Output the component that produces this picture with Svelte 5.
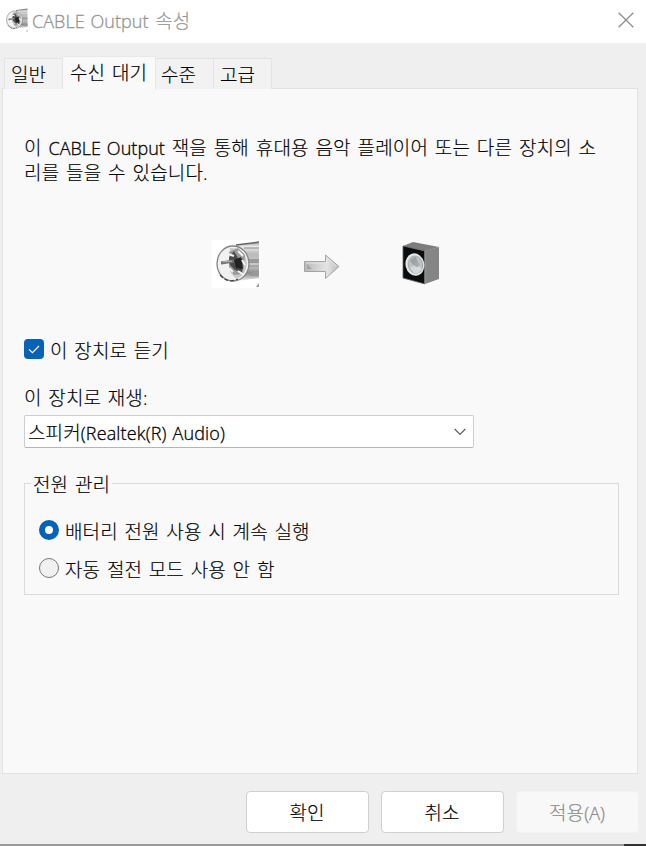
<script>
  const tabs = [
    { label: '일반', width: 59 },
    { label: '수신 대기', width: 93, active: true },
    { label: '수준', width: 58 },
    { label: '고급', width: 58 }
  ];
  let listen = $state(true);
  let power = $state(0);
  const options = ['배터리 전원 사용 시 계속 실행', '자동 절전 모드 사용 안 함'];
</script>

{#snippet jack(size)}
  <svg width={size} height={size} viewBox="0 0 48 48">
    <defs>
      <linearGradient id="metal" x1="0" y1="0" x2="0" y2="1">
        <stop offset="0" stop-color="#999" /><stop offset=".12" stop-color="#eee" />
        <stop offset=".3" stop-color="#bbb" /><stop offset=".6" stop-color="#c8c8c8" />
        <stop offset=".8" stop-color="#8a8a8a" /><stop offset="1" stop-color="#eee" />
      </linearGradient>
    </defs>
    <path d="M0 0H48V48H0Z" fill="#fff" />
    <path d="M21 6 47 2V38L24 41Z" fill="url(#metal)" />
    <path d="M24 5 47 2" stroke="#666" stroke-width="1.5" />
    <path d="M32 8H47M34 26H47" stroke="#888" />
    <path d="M36 19H47V23H36ZM40 31H47V36H38Z" fill="#999" />
    <ellipse cx="21" cy="23.5" rx="16" ry="17.5" fill="#f1f1f1" stroke="#858585" stroke-width="1.3" />
    <path d="M18 8Q33 7 35 23Q34 36 24 39L18 32Z" fill="#c9c9c9" />
    <path d="M17 12 26 8 33 15 31 34 22 35 17 29Z" fill="#999" />
    <path d="M17 18 22 11 26 18 31 19 30 32 23 30 18 25Z" fill="#4a4a4a" />
    <path d="M22 20 29 17 31 29 24 28Z" fill="#222" />
    <path d="M16 14 22 16M26 11 31 16M26 31 32 35M30 20 33 25M17 28 21 32" stroke="#f4f4f4" stroke-width="2" />
    <path d="M9 23 22 21" stroke="#707070" stroke-width="3" />
    <path d="M11 22 20 21" stroke="#bbb" />
    <path d="M8 35Q16 44 26 39" fill="none" stroke="#444" stroke-width="1.3" stroke-dasharray="4 2" />
    <path d="M44 47 47 43V47Z" fill="#999" />
  </svg>
{/snippet}

<div class="window">
  <header>
    {@render jack(24)}
    <span class="title"><span class="en">CABLE Output</span> 속성</span>
    <svg class="close" width="16" height="16" viewBox="0 0 16 16"><path d="M.7.7 15.3 15.3M15.3.7.7 15.3" stroke="#8c8c8c" stroke-width="1.3" /></svg>
  </header>

  <nav>
    {#each tabs as tab}
      <div class="tab" class:active={tab.active} style:width="{tab.width}px">{tab.label}</div>
    {/each}
  </nav>

  <main>
    <p>이 <span class="en">CABLE Output</span> 잭을 통해 휴대용 음악 플레이어 또는 다른 장치의 소<br />리를 들을 수 있습니다.</p>

    <div class="flow">
      {@render jack(48)}
      <svg class="arrow" width="38" height="28" viewBox="0 0 38 28">
        <defs><linearGradient id="arr"><stop stop-color="#bbb" /><stop offset=".65" stop-color="#e4e4e4" /><stop offset="1" stop-color="#bcbcbc" /></linearGradient></defs>
        <path d="M1.5 8.5H22.5V2L36 13.5 22.5 25.5V18.5H1.5Z" fill="url(#arr)" stroke="#a4a4a4" />
        <path d="M3 10H24V5L33 13" fill="none" stroke="#e5e5e5" />
        <path d="M4 16V11L9 16Z" fill="#a5a5a5" />
      </svg>
      <svg class="speaker" width="48" height="48" viewBox="0 0 48 48">
        <path d="M5 6 15 2 41 7 28 11Z" fill="#7d7d7d" />
        <path d="M27 11 41 7V39L27 44Z" fill="#858585" />
        <path d="M5 6 27 11V44L5 38Z" fill="#0b0c0e" stroke="#626262" stroke-width=".8" />
        <path d="M27 11V44" stroke="#aaa" />
        <ellipse cx="17" cy="24.5" rx="9.4" ry="11.2" fill="#e4e4e4" transform="rotate(-12 17 25)" />
        <ellipse cx="17.5" cy="24.8" rx="7.2" ry="8.8" fill="#bcc2c4" stroke="#989ea0" stroke-width=".7" transform="rotate(-12 17 25)" />
        <path d="M12 21Q14 17 18 17L20 23 17 27Z" fill="#9ba3a6" />
        <path d="M12 28 19 24 24 29Q20 35 16 33Z" fill="#d5d9da" />
        <ellipse cx="19" cy="24.5" rx="2.2" ry="2.6" fill="#a4abad" />
      </svg>
    </div>

    <label class="check">
      <input type="checkbox" bind:checked={listen} />
      <span class="box">{#if listen}<svg width="20" height="20" viewBox="0 0 20 20"><path d="M5 10.3 8.5 13.7 15 7" fill="none" stroke="#fff" stroke-width="1.1" /></svg>{/if}</span>
      <span>이 장치로 듣기</span>
    </label>

    <div class="caption">이 장치로 재생:</div>
    <div class="select">
      <span>스피커<span class="en">(Realtek(R) Audio)</span></span>
      <svg width="12" height="8" viewBox="0 0 12 8"><path d="M.7 1 6 6.3 11.3 1" fill="none" stroke="#5c5c5c" stroke-width="1.2" /></svg>
    </div>

    <fieldset>
      <legend>전원 관리</legend>
      {#each options as option, i}
        <label class="radio">
          <input type="radio" name="power" value={i} bind:group={power} />
          <span class="dot" class:on={power === i}></span>
          <span>{option}</span>
        </label>
      {/each}
    </fieldset>
  </main>

  <footer>
    <button>확인</button>
    <button>취소</button>
    <button disabled>적용<span class="en">(A)</span></button>
  </footer>
  <div class="edge"></div>
</div>

<style>
  :global(body) { margin: 0; background: #efefef; }
  .window { width: 646px; height: 846px; box-sizing: border-box; display: flex; flex-direction: column; background: #efefef; color: #000; font: 300 19px/25px "Open Sans", "Noto Sans CJK KR", sans-serif; letter-spacing: .1px; word-spacing: 1.7px; white-space: nowrap; -webkit-text-stroke: .15px currentColor; }
  .window svg { display: block; flex: none; }
  .en { font-family: "Open Sans", sans-serif; font-weight: 300; font-size: 18px; letter-spacing: .05px; word-spacing: 1px; -webkit-text-stroke: .3px currentColor; }
  header { height: 43px; box-sizing: border-box; background: #fff; display: flex; align-items: flex-start; padding: 8px 12px 0 4px; color: #949494; }
  .title { margin: 1px 0 0 4px; }
  .close { margin: 4px 0 0 auto; }
  nav { display: flex; align-items: flex-end; height: 46px; padding-left: 4px; flex: none; z-index: 1; }
  .tab { box-sizing: border-box; height: 31px; margin-bottom: 0; background: #f2f2f2; border: 1px solid #e4e4e4; border-left-width: 0; border-bottom: 0; padding: 4px 0 0 5px; }
  .tab:first-child { border-left-width: 1px; padding-left: 6px; }
  .tab:last-child { padding-left: 6px; }
  .tab.active { height: 34px; margin-bottom: -1px; background: #f9f9f9; border-color: #e8e8e8; padding: 4px 0 0 7px; }
  main { box-sizing: border-box; margin: -1px 8px 0 2px; height: 686px; flex: none; background: #f9f9f9; border: 1px solid #e2e2e2; padding: 47px 18px 0 21px; }
  p { margin: 0; letter-spacing: .15px; }
  .flow { display: flex; align-items: flex-start; height: 48px; margin: 54px 0 0 188px; }
  .arrow { margin: 13px 0 0 43px; }
  .speaker { margin-left: 57px; }
  label { display: flex; align-items: center; }
  input { position: absolute; opacity: 0; width: 0; height: 0; margin: 0; }
  .check { height: 25px; margin-top: 51px; gap: 6px; }
  .box { width: 20px; height: 20px; border-radius: 4px; background: #0562b8; margin-top: -5px; }
  .caption { margin-top: 22px; }
  .select { width: 450px; height: 33px; margin-top: 4px; box-sizing: border-box; border: 1px solid #cecece; border-bottom-color: #b5b5b5; border-radius: 2px; background: #fff; display: flex; justify-content: space-between; align-items: center; padding: 1px 7px 0 3px; }
  .select > span { margin-top: 2px; }
  .select .en { letter-spacing: .15px; }
  fieldset { box-sizing: border-box; height: 124px; min-width: 0; margin: 23px 0 0; padding: 18px 14px 0; border: 1px solid #dadada; }
  legend { height: 23px; padding: 2px 2px 0 2px; margin-left: -8px; margin-bottom: -1px; }
  .radio { height: 38px; gap: 6px; }
  .dot { box-sizing: border-box; width: 20px; height: 20px; border: 1px solid #777; border-radius: 50%; background: #f1f1f1; margin-top: -4px; }
  .dot.on { border: 6px solid #0562b8; background: #fff; }
  footer { display: flex; gap: 12px; justify-content: flex-end; padding: 17px 7px 0 0; height: 70px; box-sizing: border-box; }
  button { box-sizing: border-box; width: 123px; height: 42px; border: 1px solid #d0d0d0; border-radius: 4px; background: #fff; color: #000; font: inherit; padding: 2px 1px 0 0; letter-spacing: .1px; }
  button:disabled { background: #f8f8f8; border-color: #f3f3f3; color: #8c8c8c; }
  .edge { height: 2px; background: linear-gradient(90deg, #999 624px, #333 624px); }
</style>
